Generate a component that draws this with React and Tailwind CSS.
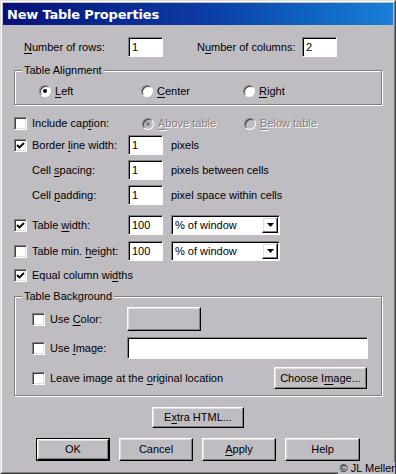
import React from 'react';

const U = ({ children }) => <span className="underline decoration-1 underline-offset-[2px]">{children}</span>;

const Check = ({ checked }) => (
  <div className="w-[13px] h-[13px] shrink-0 bg-white border border-t-[#808080] border-l-[#808080] border-r-white border-b-white shadow-[inset_1px_1px_0_#404040,inset_-1px_-1px_0_#dfdfdf] flex items-center justify-center">
    {checked && (
      <svg width="9" height="9" viewBox="0 0 9 9">
        <path d="M1 4 L3.5 6.5 L8 2" stroke="#000" strokeWidth="1.8" fill="none" />
      </svg>
    )}
  </div>
);

const Radio = ({ checked, disabled }) => (
  <div
    className={`w-[12px] h-[12px] shrink-0 rounded-full border border-t-[#808080] border-l-[#808080] border-r-white border-b-white shadow-[inset_1px_1px_0_#404040] flex items-center justify-center ${
      disabled ? 'bg-[#c0bdc2]' : 'bg-white'
    }`}
  >
    {checked && <div className={`w-[4px] h-[4px] rounded-full ${disabled ? 'bg-[#808080]' : 'bg-black'}`} />}
  </div>
);

const Field = ({ className = '', children }) => (
  <div
    className={`bg-white border border-t-[#808080] border-l-[#808080] border-r-white border-b-white shadow-[inset_1px_1px_0_#000] flex items-center pl-[3px] shrink-0 ${className}`}
  >
    {children}
  </div>
);

const Btn = ({ className = '', children }) => (
  <div
    className={`flex items-center justify-center shrink-0 border border-t-white border-l-white border-r-black border-b-black shadow-[inset_-1px_-1px_0_#808080,inset_1px_1px_0_#dfdfdf] ${className}`}
  >
    {children}
  </div>
);

const Select = () => (
  <Field className="w-[109px] h-[20px] justify-between pr-[1px]">
    <span>% of window</span>
    <Btn className="w-[16px] h-[16px]">
      <svg width="7" height="4" viewBox="0 0 7 4">
        <path d="M0 0 H7 L3.5 4 Z" fill="#000" />
      </svg>
    </Btn>
  </Field>
);

const Group = ({ title, className = '', children }) => (
  <div className={`relative border border-[#808080] shadow-[1px_1px_0_#fff,inset_1px_1px_0_#fff] ${className}`}>
    <span className="absolute left-[7px] top-[-8px] px-[2px] bg-[#c0bdc2] leading-[14px]">{title}</span>
    {children}
  </div>
);

export default function App() {
  return (
    <div
      className="relative w-[396px] h-[474px] bg-[#c0bdc2] border border-t-[#dfdfdf] border-l-[#dfdfdf] border-r-[#404040] border-b-[#404040] text-[11px] text-black"
      style={{ fontFamily: '"Liberation Sans", Arial, sans-serif' }}
    >
      <div className="h-full border border-t-white border-l-white border-r-[#808080] border-b-[#808080] p-[1px]">
        {/* title bar */}
        <div className="h-[22px] flex items-center pl-[4px] pt-[1px] bg-gradient-to-r from-[#08107a] via-[#0c3aa2] to-[#1a80d8]">
          <span
            className="text-white font-bold text-[13px] tracking-[-0.2px]"
            style={{ fontFamily: '"DejaVu Sans", Verdana, sans-serif' }}
          >
            New Table Properties
          </span>
        </div>

        <div className="px-[11px]">
          {/* rows / columns */}
          <div className="flex items-center h-[20px] mt-[12px]">
            <span className="ml-[10px] w-[104px]"><U>N</U>umber of rows:</span>
            <Field className="w-[35px] h-[20px]">1</Field>
            <span className="ml-[34px] w-[105px]">N<U>u</U>mber of columns:</span>
            <Field className="w-[35px] h-[20px]">2</Field>
          </div>

          {/* alignment */}
          <Group title="Table Alignment" className="mt-[13px] h-[35px] w-[368px]">
            <div className="flex items-center mt-[12px] pl-[24px]">
              <div className="flex items-center gap-[4px] w-[102px]">
                <Radio checked />
                <span><U>L</U>eft</span>
              </div>
              <div className="flex items-center gap-[4px] w-[102px]">
                <Radio />
                <span><U>C</U>enter</span>
              </div>
              <div className="flex items-center gap-[4px]">
                <Radio />
                <span><U>R</U>ight</span>
              </div>
            </div>
          </Group>

          {/* caption */}
          <div className="flex items-center h-[13px] mt-[12px]">
            <div className="flex items-center gap-[5px] w-[128px]">
              <Check />
              <span>Include cap<U>t</U>ion:</span>
            </div>
            <div className="flex items-center gap-[4px] w-[102px] text-[#808080] [text-shadow:1px_1px_0_#fff]">
              <Radio checked disabled />
              <span><U>A</U>bove table</span>
            </div>
            <div className="flex items-center gap-[4px] text-[#808080] [text-shadow:1px_1px_0_#fff]">
              <Radio disabled />
              <span><U>B</U>elow table</span>
            </div>
          </div>

          {/* border width */}
          <div className="flex items-center h-[20px] mt-[5px]">
            <div className="flex items-center gap-[5px] w-[114px]">
              <Check checked />
              <span>Border <U>l</U>ine width:</span>
            </div>
            <Field className="w-[35px] h-[20px]">1</Field>
            <span className="ml-[8px]">pixels</span>
          </div>

          <div className="flex items-center h-[20px] mt-[5px]">
            <span className="w-[114px] pl-[18px]">Cell <U>s</U>pacing:</span>
            <Field className="w-[35px] h-[20px]">1</Field>
            <span className="ml-[8px]">pixels between cells</span>
          </div>

          <div className="flex items-center h-[20px] mt-[5px]">
            <span className="w-[114px] pl-[18px]">Cell <U>p</U>adding:</span>
            <Field className="w-[35px] h-[20px]">1</Field>
            <span className="ml-[8px]">pixel space within cells</span>
          </div>

          <div className="flex items-center h-[20px] mt-[10px]">
            <div className="flex items-center gap-[5px] w-[114px]">
              <Check checked />
              <span>Table <U>w</U>idth:</span>
            </div>
            <Field className="w-[35px] h-[20px]">100</Field>
            <div className="ml-[8px]">
              <Select />
            </div>
          </div>

          <div className="flex items-center h-[20px] mt-[6px]">
            <div className="flex items-center gap-[5px] w-[114px]">
              <Check />
              <span>Table min. <U>h</U>eight:</span>
            </div>
            <Field className="w-[35px] h-[20px]">100</Field>
            <div className="ml-[8px]">
              <Select />
            </div>
          </div>

          <div className="flex items-center gap-[5px] h-[13px] mt-[8px]">
            <Check checked />
            <span>Equal column wi<U>d</U>ths</span>
          </div>

          {/* background */}
          <Group title="Table Background" className="mt-[14px] h-[100px] w-[368px]">
            <div className="flex items-center h-[24px] mt-[10px] pl-[17px]">
              <div className="flex items-center gap-[5px] w-[95px]">
                <Check />
                <span>Use <U>C</U>olor:</span>
              </div>
              <Btn className="w-[74px] h-[24px]" />
            </div>
            <div className="flex items-center h-[22px] mt-[6px] pl-[17px]">
              <div className="flex items-center gap-[5px] w-[95px]">
                <Check />
                <span>Use <U>I</U>mage:</span>
              </div>
              <Field className="w-[241px] h-[22px]" />
            </div>
            <div className="flex items-center h-[22px] mt-[8px] pl-[17px]">
              <div className="flex items-center gap-[5px] w-[242px]">
                <Check />
                <span>Leave image at the <U>o</U>riginal location</span>
              </div>
              <Btn className="w-[93px] h-[22px]">
                <span>Choose I<U>m</U>age...</span>
              </Btn>
            </div>
          </Group>

          <div className="flex mt-[11px] pl-[138px]">
            <Btn className="w-[92px] h-[21px]">
              <span>E<U>x</U>tra HTML...</span>
            </Btn>
          </div>

          <div className="flex items-center mt-[10px] pl-[22px] gap-[9px]">
            <div className="border border-black">
              <Btn className="w-[72px] h-[21px]">OK</Btn>
            </div>
            <Btn className="w-[74px] h-[23px]">Cancel</Btn>
            <Btn className="w-[74px] h-[23px]">
              <span><U>A</U>pply</span>
            </Btn>
            <Btn className="w-[75px] h-[23px]">Help</Btn>
          </div>
        </div>
      </div>

      <span className="absolute right-0 bottom-[-1px] text-[11px] leading-[12px] bg-[#c0bdc2] pl-[2px]">© JL Meller</span>
    </div>
  );
}
